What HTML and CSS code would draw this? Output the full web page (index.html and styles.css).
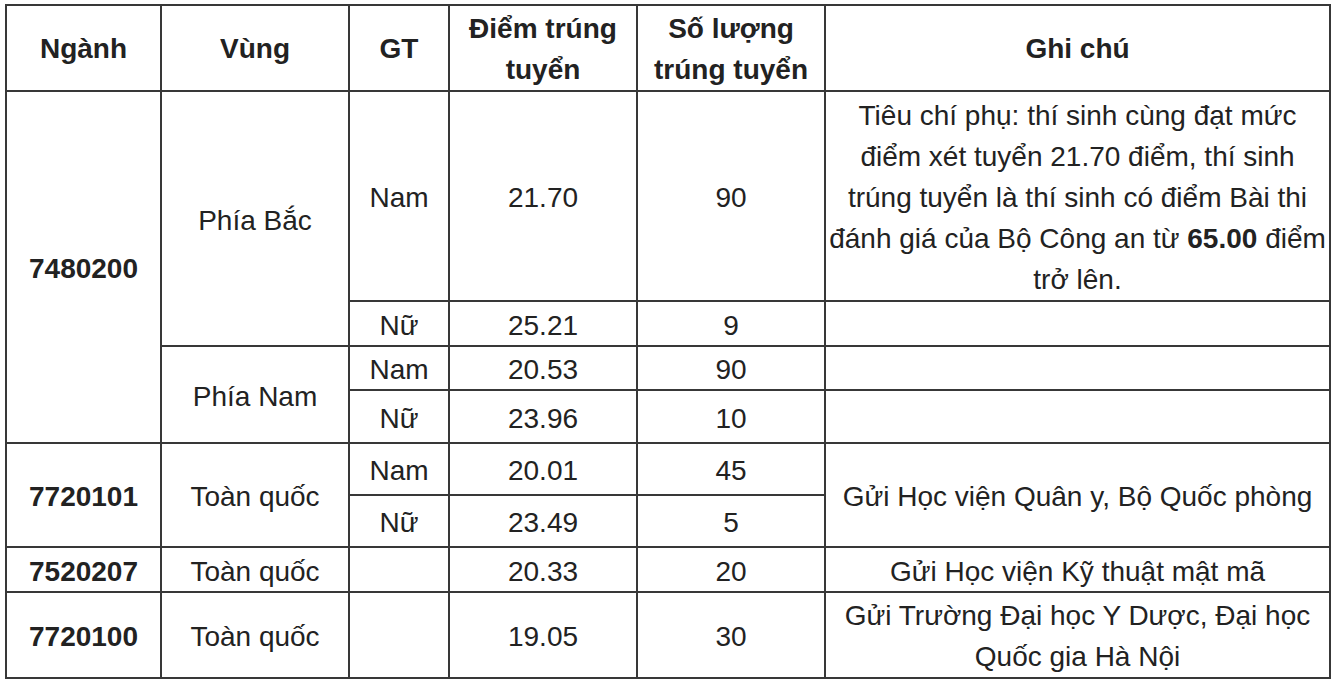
FILE: index.html
```html
<!DOCTYPE html>
<html lang="vi">
<head>
<meta charset="utf-8">
<title>Điểm trúng tuyển</title>
<link rel="stylesheet" href="styles.css">
</head>
<body>
<table class="scores">
  <colgroup>
    <col class="c-nganh">
    <col class="c-vung">
    <col class="c-gt">
    <col class="c-diem">
    <col class="c-sl">
    <col class="c-note">
  </colgroup>
  <thead>
    <tr class="h-head">
      <th>Ngành</th>
      <th>Vùng</th>
      <th>GT</th>
      <th>Điểm trúng tuyển</th>
      <th>Số lượng trúng tuyển</th>
      <th>Ghi chú</th>
    </tr>
  </thead>
  <tbody>
    <tr class="h-r1">
      <td class="code" rowspan="4">7480200</td>
      <td rowspan="2">Phía Bắc</td>
      <td>Nam</td>
      <td>21.70</td>
      <td>90</td>
      <td class="note-long">Tiêu chí phụ: thí sinh cùng đạt mức điểm xét tuyển 21.70 điểm, thí sinh trúng tuyển là thí sinh có điểm Bài thi đánh giá của Bộ Công an từ <b>65.00</b> điểm trở lên.</td>
    </tr>
    <tr class="h-r2">
      <td>Nữ</td>
      <td>25.21</td>
      <td>9</td>
      <td></td>
    </tr>
    <tr class="h-r3">
      <td rowspan="2">Phía Nam</td>
      <td>Nam</td>
      <td>20.53</td>
      <td>90</td>
      <td></td>
    </tr>
    <tr class="h-r4">
      <td>Nữ</td>
      <td>23.96</td>
      <td>10</td>
      <td></td>
    </tr>
    <tr class="h-r5">
      <td class="code" rowspan="2">7720101</td>
      <td rowspan="2">Toàn quốc</td>
      <td>Nam</td>
      <td>20.01</td>
      <td>45</td>
      <td rowspan="2">Gửi Học viện Quân y, Bộ Quốc phòng</td>
    </tr>
    <tr class="h-r6">
      <td>Nữ</td>
      <td>23.49</td>
      <td>5</td>
    </tr>
    <tr class="h-r7">
      <td class="code">7520207</td>
      <td>Toàn quốc</td>
      <td></td>
      <td>20.33</td>
      <td>20</td>
      <td>Gửi Học viện Kỹ thuật mật mã</td>
    </tr>
    <tr class="h-r8">
      <td class="code">7720100</td>
      <td>Toàn quốc</td>
      <td></td>
      <td>19.05</td>
      <td>30</td>
      <td class="note-two">Gửi Trường Đại học Y Dược, Đại học Quốc gia Hà Nội</td>
    </tr>
  </tbody>
</table>
</body>
</html>
```

FILE: styles.css
```css
html, body {
  margin: 0;
  padding: 0;
  background: #ffffff;
}

body {
  padding: 4px 0 0 5px;
  font-family: "Liberation Sans", Arial, sans-serif;
  color: #222222;
}

.scores {
  border-collapse: collapse;
  table-layout: fixed;
  width: 1324px;
  font-size: 28px;
  line-height: 39px;
}

.scores th,
.scores td {
  border: 2px solid #383838;
  padding: 3px 2px 0;
  text-align: center;
  vertical-align: middle;
}

.scores th {
  line-height: 40.5px;
}

.scores th,
.scores .code {
  font-weight: bold;
}

.scores .note-long {
  line-height: 41px;
}

.scores .note-two {
  line-height: 40.5px;
}

.c-nganh { width: 155px; }
.c-vung { width: 188px; }
.c-gt { width: 100px; }
.c-diem { width: 188px; }
.c-sl { width: 188px; }
.c-note { width: 505px; }

.h-head { height: 86px; }
.h-r1 { height: 210px; }
.h-r2 { height: 45px; }
.h-r3 { height: 44px; }
.h-r4 { height: 53px; }
.h-r5 { height: 52px; }
.h-r6 { height: 52px; }
.h-r7 { height: 45px; }
.h-r8 { height: 86px; }
```
